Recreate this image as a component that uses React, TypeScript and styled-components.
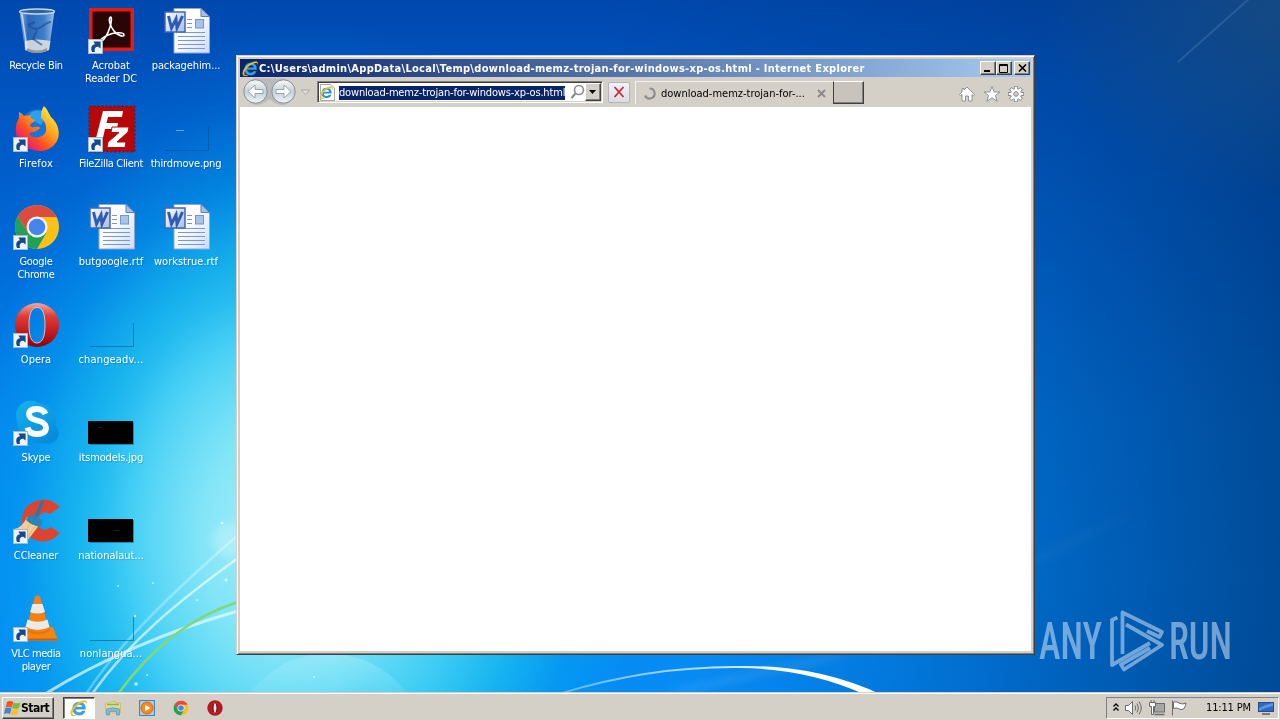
import React from "react";
import styled, { createGlobalStyle, css } from "styled-components";

const FACE = "#d4d0c8";
const SHADOW = "#808080";
const DARK = "#404040";

const GlobalStyle = createGlobalStyle`
  * {
    box-sizing: border-box;
  }

  body {
    margin: 0;
    overflow: hidden;
    font-family: "DejaVu Sans Condensed", "DejaVu Sans", sans-serif;
    font-stretch: condensed;
    font-size: 11px;
    color: #000;
  }

  svg {
    display: block;
    flex: none;
  }
`;

const raised = css`
  border: 1px solid;
  border-color: #fff ${DARK} ${DARK} #fff;
  box-shadow: inset -1px -1px 0 ${SHADOW};
`;

const StyledDesktop = styled.div`
  position: relative;
  display: flex;
  flex-direction: column;
  width: 1280px;
  height: 720px;
  overflow: hidden;
  background:
    radial-gradient(ellipse 150px 230px at 255px 530px, rgba(180, 244, 250, 0.5) 0, rgba(150, 236, 250, 0.3) 50%, transparent 100%),
    radial-gradient(ellipse 400px 520px at 300px 540px, #84e6f6 0, #74e0f6 24%, rgba(62, 206, 244, 0.96) 42%, rgba(24, 184, 238, 0.88) 56%, rgba(4, 154, 236, 0.62) 70%, rgba(0, 126, 226, 0.25) 86%, transparent 100%),
    radial-gradient(ellipse 700px 480px at 330px 700px, rgba(10, 160, 255, 0.85) 0, rgba(10, 150, 255, 0.7) 45%, transparent 100%),
    radial-gradient(ellipse 240px 190px at 1280px 10px, rgba(40, 92, 130, 0.5), transparent),
    linear-gradient(95deg, transparent 45%, rgba(0, 48, 112, 0.32) 80%, rgba(0, 44, 104, 0.66) 100%),
    linear-gradient(#0048ae 0, #0057c3 15%, #006ad8 38%, #007ce8 58%, #0084f0 80%, #0080ee 100%);
`;

const StyledStreaks = styled.svg`
  position: absolute;
  left: 0;
  top: 0;
  pointer-events: none;
`;

const StyledIconGrid = styled.div`
  position: relative;
  flex: 1;
  display: grid;
  grid-template-rows: repeat(7, 98px);
  grid-auto-columns: 75px;
  grid-auto-flow: column;
  margin-left: -1px;
`;

const StyledShortcut = styled.div`
  display: flex;
  flex-direction: column;
  align-items: center;
  gap: 4px;
  padding-top: 7px;
`;

const StyledLabel = styled.span<{ $track: number }>`
  margin-right: 1px;
  color: #fff;
  line-height: 13px;
  text-align: center;
  white-space: pre;
  letter-spacing: ${({ $track }) => $track}px;
  text-shadow: 1px 1px 1px rgba(0, 40, 100, 0.25);
`;

const StyledWindow = styled.div`
  position: absolute;
  left: 236px;
  top: 55px;
  width: 799px;
  height: 600px;
  display: flex;
  flex-direction: column;
  padding: 3px;
  background: ${FACE};
  border: 1px solid;
  border-color: ${FACE} ${DARK} ${DARK} ${FACE};
  box-shadow: inset 1px 1px 0 #fff, inset -1px -1px 0 ${SHADOW};
`;

const StyledTitleBar = styled.div`
  display: flex;
  align-items: center;
  height: 18px;
  padding: 0 1px 0 2px;
  background: linear-gradient(90deg, #0a246a, #a6caf0);
`;

const StyledTitle = styled.span`
  flex: 1;
  color: #fff;
  font-weight: bold;
  white-space: pre;
  letter-spacing: 0.29px;
`;

const StyledCaptionButton = styled.div<{ $gap?: boolean }>`
  ${raised}
  display: flex;
  align-items: center;
  justify-content: center;
  width: 16px;
  height: 14px;
  margin-left: ${({ $gap }) => ($gap ? 2 : 0)}px;
  background: ${FACE};
`;

const StyledToolbar = styled.div`
  display: flex;
  align-items: center;
  height: 30px;
  background: ${FACE};
`;

const StyledAddress = styled.div`
  display: flex;
  align-items: center;
  width: 286px;
  height: 22px;
  margin-left: 5px;
  padding: 0 1px 0 2px;
  background: #fff;
  border: 1px solid;
  border-color: ${SHADOW} #fff #fff ${SHADOW};
  box-shadow: inset 1px 1px 0 ${DARK}, inset -1px -1px 0 ${FACE};
`;

const StyledSelection = styled.span`
  width: 227px;
  height: 14px;
  margin: 1px 5px 0 4px;
  overflow: hidden;
  background: #0a246a;
  color: #fff;
  line-height: 14px;
  white-space: pre;
  letter-spacing: -0.17px;
`;

const StyledDropButton = styled.div`
  ${raised}
  display: flex;
  align-items: center;
  justify-content: center;
  width: 16px;
  height: 18px;
  margin-left: auto;
  background: ${FACE};
`;

const StyledStop = styled.div`
  display: flex;
  align-items: center;
  justify-content: center;
  width: 22px;
  height: 21px;
  margin-left: 5px;
  background: linear-gradient(#f4f2f6, #dcdce6);
  border: 1px solid #b4b4c0;
  border-radius: 2px;
`;

const StyledTab = styled.div`
  display: flex;
  align-items: center;
  width: 198px;
  height: 23px;
  margin-left: 5px;
  padding: 1px 7px 0 7px;
  border-left: 1px solid #f4f2ee;
  border-top: 1px solid #f4f2ee;
`;

const StyledTabText = styled.span`
  flex: 1;
  margin-left: 5px;
  white-space: pre;
`;

const StyledNewTab = styled.div`
  ${raised}
  width: 31px;
  height: 23px;
  background: #c8c4bd;
  border-left-color: ${DARK};
`;

const StyledCommands = styled.div`
  display: flex;
  gap: 6.5px;
  margin-left: auto;
  padding: 4px 6px 0 0;
`;

const StyledPage = styled.div`
  flex: 1;
  background: #fff;
`;

const StyledWatermark = styled.svg`
  position: absolute;
  left: 1036px;
  top: 590px;
  overflow: visible;
`;

const StyledTaskbar = styled.div`
  position: relative;
  display: flex;
  align-items: center;
  height: 28px;
  padding: 2px 1px 0 2px;
  background: ${FACE};
  border-top: 1px solid ${FACE};
  box-shadow: inset 0 1px 0 #fff;
`;

const StyledStart = styled.div`
  ${raised}
  display: flex;
  align-items: center;
  width: 52px;
  height: 22px;
  padding-left: 1px;
  font-weight: bold;
  font-size: 12px;
  letter-spacing: -0.5px;
`;

const StyledTask = styled.div`
  display: flex;
  align-items: center;
  justify-content: center;
  width: 32px;
  height: 22px;
  margin-left: 9px;
  background: #fff;
  border: 1px solid;
  border-color: ${DARK} #fff #fff ${DARK};
  box-shadow: inset 1px 1px 0 ${SHADOW};
`;

const StyledPinned = styled.div`
  display: flex;
  gap: 18px;
  margin-left: 10px;
`;

const StyledTray = styled.div`
  display: flex;
  align-items: center;
  width: 173px;
  height: 22px;
  margin-left: auto;
  padding: 0 2px 0 5px;
  border: 1px solid;
  border-color: ${SHADOW} #fff #fff ${SHADOW};
`;

const StyledClock = styled.span`
  margin: 0 7px 0 10px;
  white-space: pre;
  letter-spacing: -0.15px;
`;

const ShortcutArrow = () => (
  <g>
    <rect x="0.500" y="32.500" width="14" height="14" fill="#eef3f8" stroke="#a9b8c6" />
    <path d="M4 45 C2.200 40.500 4 37.500 7 37.300 L5.400 34.500 H12.600 V41.600 L10.300 39.700 C7.600 39.600 6 41.500 7 45 Z" fill="#15498f" />
  </g>
);

const RecycleBin = () => (
  <svg width="48" height="48" viewBox="0 0 48 48">
    <defs>
      <linearGradient id="bin" x1="0" x2="1">
        <stop offset="0" stopColor="#a8c8e8" stopOpacity="0.85" />
        <stop offset="0.25" stopColor="#2f6cba" stopOpacity="0.85" />
        <stop offset="0.7" stopColor="#4a86d0" stopOpacity="0.85" />
        <stop offset="1" stopColor="#b4cce4" stopOpacity="0.9" />
      </linearGradient>
    </defs>
    <path d="M6.500 4 L12 43 Q24 49 36 43 L41.500 4 Z" fill="url(#bin)" />
    <path d="M12 34 Q24 31 37.500 34 L36 43 Q24 49 12 43 Z" fill="#d9dfe2" opacity="0.9" />
    <path d="M14 41 Q24 46 34 41 V44 Q24 48 14 44 Z" fill="#9a968e" />
    <ellipse cx="24" cy="4.500" rx="17.500" ry="2.500" fill="#2f629f" stroke="#c5d6e4" strokeWidth="1.300" />
    <path d="M15 17 Q21 25 28 20 T38 15 M15 18 L22 15 M24 23 L20 32 L29 38" fill="none" stroke="#1b478c" strokeWidth="2" opacity="0.6" />
    <path d="M9 7 L14 42" stroke="#eef6ff" strokeWidth="1.500" opacity="0.7" />
  </svg>
);

const Acrobat = () => (
  <svg width="48" height="48" viewBox="0 0 48 48">
    <rect x="1" y="1" width="45" height="43" fill="#ea1a10" />
    <rect x="4.500" y="4.500" width="38" height="36" fill="#2a0505" />
    <path d="M22.500 10 C20 12 22 19 26 24 C30 29 36 30 36 28 C36 25 27 25 20 28 C14 30.500 11 34 12.500 34.500 C15 35 20 27 22 20 C23.500 15 24 10 22.500 10 Z" fill="none" stroke="#fff" strokeWidth="1.600" />
    <ShortcutArrow />
  </svg>
);

const WordDoc = () => (
  <svg width="48" height="48" viewBox="0 0 48 48">
    <defs>
      <linearGradient id="sheet" x1="0" x2="1" y2="1">
        <stop offset="0.4" stopColor="#fff" />
        <stop offset="1" stopColor="#c9dcf8" />
      </linearGradient>
      <linearGradient id="badge" x1="0" x2="1" y2="1">
        <stop offset="0" stopColor="#fff" />
        <stop offset="1" stopColor="#a5bdec" />
      </linearGradient>
    </defs>
    <path d="M11 1.500 H38 L46.500 9.500 V46 H11 Z" fill="url(#sheet)" stroke="#8ea5cf" />
    <path d="M38 1.500 V9.500 H46.500 Z" fill="#a9c0e4" stroke="#5c7db8" />
    <path d="M24 12.500 H29 M24 16.500 H29 M24 20.500 H29 M15 25.500 H42 M15 29.500 H42 M15 33.500 H42 M15 37.500 H42 M15 41.500 H42" stroke="#7f96c8" />
    <rect x="32.500" y="12.500" width="8" height="8.500" fill="#a9c2ea" stroke="#7795ca" />
    <rect x="2" y="5" width="20" height="20" fill="url(#badge)" stroke="#4167b2" strokeWidth="1.500" />
    <path d="M5.500 9 L8.500 21 L13 12 L14 21 L19.500 9" fill="none" stroke="#2f5cb0" strokeWidth="3" />
  </svg>
);

const Firefox = () => (
  <svg width="48" height="48" viewBox="0 0 48 48">
    <defs>
      <linearGradient id="fox" x1="0.900" y1="0.100" x2="0.200" y2="0.900">
        <stop offset="0" stopColor="#fff044" />
        <stop offset="0.4" stopColor="#ffa31c" />
        <stop offset="0.72" stopColor="#ff4a26" />
        <stop offset="1" stopColor="#e31587" />
      </linearGradient>
    </defs>
    <circle cx="24" cy="21" r="16.500" fill="#1a74d8" />
    <path d="M17 8 Q24 3 31 7 Q33 14 28 20 L18 14 Z" fill="#2aa0ee" />
    <path d="M31 1 C35 5 35 7 38 12 C45 18 48 28 44 36 C39 45 29 48 20 45 C8 42 1 33 3 22 C3 18 5 15 6 13 L6 7 Q9 8 11 11 L18 10 C17 13 18 14 22 15 C22 17 17 18 17 21 C20 24 24 20 27 23 C22 29 17 26 16 29 C20 35 31 33 33 26 C34 20 31 15 28 13 C28 9 28 5 31 1 Z" fill="url(#fox)" />
    <ShortcutArrow />
  </svg>
);

const FileZilla = () => (
  <svg width="48" height="48" viewBox="0 0 48 48">
    <rect x="1.500" y="1.500" width="45" height="45" fill="#b80708" stroke="#8f0810" strokeWidth="2" strokeDasharray="2 2" />
    <path d="M15 6 H35 L34 12 H20 L18.500 18 H30 L29 24 H17 L14 37 H7 Z" fill="#fff" />
    <path d="M24 22 H41 L40 27 L29 37 H38 L37 42.500 H19 L20 37 L31 27.500 H23 Z" fill="#fff" stroke="#b80708" strokeWidth="1" />
    <ShortcutArrow />
  </svg>
);

const ChromeLogo = () => (
  <>
    <circle cx="24" cy="24" r="22" fill="#fbc116" />
    <path d="M4.950 13 L14.500 29.500 L24 34 L33.500 29.500 L24 46 A22 22 0 0 1 4.950 13" fill="#21a05a" />
    <path d="M4.950 13 A22 22 0 0 1 43.600 14 H24 L14.500 29.500 Z" fill="#dd4b3e" />
    <circle cx="24" cy="24" r="10.500" fill="#f4f4f4" />
    <circle cx="24" cy="24" r="8.300" fill="#4685ec" />
  </>
);

const Chrome = () => (
  <svg width="48" height="48" viewBox="0 0 48 48">
    <ChromeLogo />
    <ShortcutArrow />
  </svg>
);

const Opera = () => (
  <svg width="48" height="48" viewBox="0 0 48 48">
    <defs>
      <linearGradient id="opera" x1="0" y1="0" x2="0" y2="1">
        <stop offset="0" stopColor="#f0a9a3" />
        <stop offset="0.3" stopColor="#df3c35" />
        <stop offset="0.75" stopColor="#bb1216" />
        <stop offset="1" stopColor="#7f080c" />
      </linearGradient>
    </defs>
    <path
      fillRule="evenodd"
      d="M24 2 A22 22 0 1 0 24 46 A22 22 0 1 0 24 2 Z M24 6.500 C30 6.500 32 14 32 24 C32 34 30 42 24 42 C18 42 16 34 16 24 C16 14 18 6.500 24 6.500 Z"
      fill="url(#opera)"
    />
    <path d="M24 6.500 C30 6.500 32 14 32 24 C32 34 30 42 24 42 C18 42 16 34 16 24 C16 14 18 6.500 24 6.500 Z" fill="none" stroke="#f1c7c4" strokeWidth="0.900" />
    <ShortcutArrow />
  </svg>
);

const Skype = () => (
  <svg width="48" height="48" viewBox="0 0 48 48">
    <defs>
      <linearGradient id="skype" x1="0" x2="0.600" y2="1">
        <stop offset="0" stopColor="#15b4ee" />
        <stop offset="1" stopColor="#078bdc" />
      </linearGradient>
    </defs>
    <path d="M14 2 Q21 1 25 4 Q38 5 42 17 Q44 22 43 27 Q48 34 44 40 Q38 47 29 44 Q15 46 7 33 Q4 27 4 21 Q0 8 14 2 Z" fill="url(#skype)" />
    <path d="M32.500 15 Q30 10 24 10 Q16 10 16 15.500 Q16 19.500 24 21.500 Q33 23.500 33 28.500 Q33 35 24 35 Q16 35 14.500 28.500" fill="none" stroke="#fff" strokeWidth="5.800" />
    <ShortcutArrow />
  </svg>
);

const CCleaner = () => (
  <svg width="48" height="48" viewBox="0 0 48 48">
    <path d="M47 10 Q36 -1 23 4 Q9 9 9 24 Q9 38 22 43 Q36 48 47 36 L38 30 Q32 35 27 31 Q22 25 26 19 Q31 13 37 17 Z" fill="#dd4430" />
    <path d="M14 20 Q22 16 28 22 L24 31 L14 44 L1 32 Q9 31 14 20 Z" fill="#f3cd98" />
    <path d="M17 27 L8 40 M22 29 L13 43" stroke="#e0b57c" />
    <path d="M15 19 Q23 16 29 23 L28 29 Q20 30 13 23 Z" fill="#2c83b8" />
    <path d="M28.500 3 L31 4 L25 20 L21.500 19 Z" fill="#2478ac" />
    <ShortcutArrow />
  </svg>
);

const Vlc = () => (
  <svg width="48" height="48" viewBox="0 0 48 48">
    <path d="M8 32 H40 L45 45.500 H6 Z" fill="#f38613" />
    <path d="M6 45.500 L7 43.500 H44.300 L45 45.500 Z" fill="#d35f04" />
    <path d="M22 1.500 Q24.500 -0.500 27 1.500 L36 35 Q25 41 13 35 Z" fill="#f58013" />
    <path d="M19.500 9 H29.500 L32 17 Q24.500 20 17 17 Z M14.500 24.500 Q24.500 29 34.500 24.500 L36.500 32 Q24.500 38 12.500 32 Z" fill="#ece9e6" />
    <path d="M12.500 33.500 Q25 41 36.500 33.500 L37 36 Q25 43 12 36 Z" fill="#e8740c" />
    <ShortcutArrow />
  </svg>
);

// Image thumbnails: either a solid black picture or one that has faded into the wallpaper
const Thumbnail = ({ dark, line }: { dark?: boolean; line?: string }) => (
  <svg width="48" height="48" viewBox="0 0 48 48">
    {dark ? (
      <>
        <path d="M2 45.500 H45.500 V23" fill="none" stroke="#034a82" strokeOpacity="0.5" />
        <rect x="0" y="22" width="45" height="23" fill="#000" />
      </>
    ) : (
      <path d="M2 45.500 H45.500 V22" fill="none" stroke="#034a82" strokeOpacity="0.55" />
    )}
    {line && <path d={line} stroke={dark ? "#12351a" : "#8fc0ee"} strokeOpacity="0.7" />}
  </svg>
);

const ieBody =
  "M15.500 10.200 H5.500 Q5.800 13.500 9.300 13.500 Q11.300 13.500 12.200 12 H15.200 Q13.800 16.200 9.200 16.200 Q2.700 16 2.600 9.500 Q3 3.200 9.200 3 Q15.800 3.200 15.500 10.200 Z M5.600 8 H12.500 Q12.200 5.500 9.200 5.400 Q6.200 5.500 5.600 8 Z";
const ieRing =
  "M1.500 16.500 C-1.500 13 4 5 11 2.300 C15 0.800 17.500 1.500 16.500 5 C16.800 2.800 14.500 2.500 11.500 4 C5.500 7 0.500 13.500 3 15.800 C4 16.500 6 16 7.500 15 C5.500 17 2.800 17.600 1.500 16.500 Z";

const IeLogo = ({ size }: { size: number }) => (
  <svg width={size} height={size} viewBox="0 0 18 18">
    <path d={ieBody} fill="#35a4ea" fillRule="evenodd" stroke="#1c6fb8" strokeWidth="0.300" />
    <path d={ieRing} fill="#f3c02c" stroke="#d99b12" strokeWidth="0.200" />
  </svg>
);

const shortcuts: { label: string; icon: React.ReactNode; track: number }[] = [
  { label: "Recycle Bin", icon: <RecycleBin />, track: -0.3 },
  { label: "Firefox", icon: <Firefox />, track: 0.2 },
  { label: "Google\nChrome", icon: <Chrome />, track: -0.3 },
  { label: "Opera", icon: <Opera />, track: 0 },
  { label: "Skype", icon: <Skype />, track: -0.2 },
  { label: "CCleaner", icon: <CCleaner />, track: -0.1 },
  { label: "VLC media\nplayer", icon: <Vlc />, track: -0.4 },
  { label: "Acrobat\nReader DC", icon: <Acrobat />, track: -0.05 },
  { label: "FileZilla Client", icon: <FileZilla />, track: -0.33 },
  { label: "butgoogle.rtf", icon: <WordDoc />, track: 0 },
  { label: "changeadv...", icon: <Thumbnail />, track: 0.15 },
  { label: "itsmodels.jpg", icon: <Thumbnail dark line="M10 28.500 H15" />, track: -0.15 },
  { label: "nationalaut...", icon: <Thumbnail dark line="M25 33.500 H32" />, track: 0 },
  { label: "nonlangua...", icon: <Thumbnail />, track: 0.05 },
  { label: "packagehim...", icon: <WordDoc />, track: -0.1 },
  { label: "thirdmove.png", icon: <Thumbnail line="M13 25.500 H21" />, track: -0.15 },
  { label: "workstrue.rtf", icon: <WordDoc />, track: 0 },
];

const Streaks = () => (
  <StyledStreaks width="1280" height="692" viewBox="0 0 1280 692">
    <defs>
      <filter id="soft" x="-20%" y="-20%" width="140%" height="140%">
        <feGaussianBlur stdDeviation="0.7" />
      </filter>
      <filter id="haze" x="-30%" y="-30%" width="160%" height="160%">
        <feGaussianBlur stdDeviation="4" />
      </filter>
      <linearGradient id="beam" x1="0" x2="1">
        <stop offset="0" stopColor="#fff" stopOpacity="0.35" />
        <stop offset="0.5" stopColor="#fff" stopOpacity="0.75" />
        <stop offset="0.7" stopColor="#fff" />
      </linearGradient>
      <linearGradient id="dome" x1="0" y1="0" x2="0" y2="1">
        <stop offset="0" stopColor="#b4f0fa" stopOpacity="0.35" />
        <stop offset="1" stopColor="#b4f0fa" stopOpacity="0.1" />
      </linearGradient>
    </defs>
    <path d="M249 694 Q282 652 330 654 Q378 655 408 694 Z" fill="url(#dome)" />
    <g fill="none" filter="url(#soft)">
      <path d="M86 694 C120 642 175 590 238 535" stroke="#fff" strokeOpacity="0.3" strokeWidth="2.500" />
      <path d="M92 694 C130 640 180 600 238 558" stroke="#fff" strokeOpacity="0.6" strokeWidth="2.500" />
      <path d="M45 694 C100 660 170 630 238 611" stroke="#e8fcff" strokeOpacity="0.7" strokeWidth="3" />
      <path d="M118 694 C150 650 190 617 238 602" stroke="#7fd97a" strokeWidth="2.500" />
      <path d="M562 692 Q650 665.500 737 666 Q818 664 884 696 L868 696 Q808 668 737 668 Q650 667.500 562 694 Z" fill="url(#beam)" />
      <path d="M1178 62 L1250 -2" stroke="#5f93c0" strokeOpacity="0.3" strokeWidth="2" />
    </g>
    <g filter="url(#haze)" fill="#fff">
      <path d="M1034 566 L1130 515 L1130 512 L1034 556 Z" opacity="0.04" />
      <path d="M690 692 L850 655 H830 L660 692 Z" opacity="0.12" />
      <ellipse cx="232" cy="540" rx="20" ry="18" opacity="0.25" />
    </g>
    <g fill="#eaffff" opacity="0.75">
      <circle cx="222" cy="523" r="1.500" />
      <circle cx="226" cy="580" r="1.500" />
      <circle cx="118" cy="586" r="1" />
      <circle cx="153" cy="583" r="1" />
      <circle cx="135" cy="616" r="1.200" />
      <circle cx="197" cy="600" r="1" />
      <circle cx="136" cy="684" r="1.800" />
      <circle cx="147" cy="675" r="1" />
      <circle cx="314" cy="677" r="1" />
    </g>
  </StyledStreaks>
);

const Watermark = () => (
  <StyledWatermark width="210" height="96" viewBox="1036 590 210 96">
    <g opacity="0.55" fill="#cfe3f8" fontFamily="Roboto, sans-serif" fontSize="51" fontWeight="500">
      <text x="1039" y="659" textLength="63" lengthAdjust="spacingAndGlyphs">
        ANY
      </text>
      <text x="1169" y="659" textLength="63" lengthAdjust="spacingAndGlyphs">
        RUN
      </text>
      <g fill="none" stroke="#cfe3f8" strokeWidth="3.800" strokeLinejoin="round">
        <path d="M1117.500 617.500 L1112 620 V665 L1150 643" />
        <path d="M1122.500 654 V612.500 L1162 632 L1159.500 637 L1147 631" />
        <path d="M1126 624.500 L1162 645 L1124 669.500 L1121 664.500 L1150 648" />
      </g>
    </g>
  </StyledWatermark>
);

const NavButtons = () => (
  <svg width="72" height="28" viewBox="240 79 72 28">
    <defs>
      <linearGradient id="orb" x1="0" y1="0" x2="0" y2="1">
        <stop offset="0" stopColor="#f8fbfd" />
        <stop offset="0.5" stopColor="#c6d0d8" />
        <stop offset="1" stopColor="#eef5f8" />
      </linearGradient>
    </defs>
    <path d="M255 79.500 H284 A13.500 13.500 0 0 1 284 106 Q276 106 269.500 100 Q263 106 255.500 106 A13.500 13.500 0 0 1 255 79.500 Z" fill="#b9babb" />
    {[255.5, 283.5].map(cx => (
      <circle key={cx} cx={cx} cy="92.500" r="11.700" fill="url(#orb)" stroke="#7d868c" strokeWidth="0.900" />
    ))}
    <path d="M248 92.500 L255 86 V90.500 H263 V94.500 H255 V99 Z" fill="#fff" stroke="#98a4ac" />
    <path d="M291 92.500 L284 86 V90.500 H276 V94.500 H284 V99 Z" fill="#fff" stroke="#98a4ac" />
    <path d="M301.500 91 H309.500 L305.500 95.500 Z" fill="#e6e3de" stroke="#a9a6a1" />
  </svg>
);

const App = () => (
  <>
    <GlobalStyle />
    <StyledDesktop>
      <Streaks />
      <StyledIconGrid>
        {shortcuts.map(({ label, icon, track }) => (
          <StyledShortcut key={label}>
            {icon}
            <StyledLabel $track={track}>{label}</StyledLabel>
          </StyledShortcut>
        ))}
      </StyledIconGrid>
      <Watermark />

      <StyledWindow>
        <StyledTitleBar>
          <IeLogo size={17} />
          <StyledTitle>
            C:\Users\admin\AppData\Local\Temp\download-memz-trojan-for-windows-xp-os.html - Internet Explorer
          </StyledTitle>
          <StyledCaptionButton>
            <svg width="10" height="9" viewBox="0 0 10 9">
              <path d="M1 7 H7" stroke="#000" strokeWidth="2" />
            </svg>
          </StyledCaptionButton>
          <StyledCaptionButton>
            <svg width="10" height="9" viewBox="0 0 10 9">
              <path d="M0.500 0.500 H8.500 V8.500 H0.500 Z M0 1.500 H9" fill="none" stroke="#000" />
            </svg>
          </StyledCaptionButton>
          <StyledCaptionButton $gap>
            <svg width="9" height="8" viewBox="0 0 9 8">
              <path d="M1 0.500 L8 7.500 M8 0.500 L1 7.500" stroke="#000" strokeWidth="1.600" />
            </svg>
          </StyledCaptionButton>
        </StyledTitleBar>

        <StyledToolbar>
          <NavButtons />
          <StyledAddress>
            <svg width="15" height="17" viewBox="0 0 15 17">
              <path d="M0.500 0.500 H11 L14.500 4 V16.500 H0.500 Z" fill="#fbfbfb" stroke="#a8a8a8" />
              <g transform="translate(-0.500 1.500) scale(0.78)">
                <path d={ieBody} fill="#2b8fd9" fillRule="evenodd" />
                <path d={ieRing} fill="#d9c93a" stroke="#d9c93a" strokeWidth="0.700" />
              </g>
            </svg>
            <StyledSelection>download-memz-trojan-for-windows-xp-os.html</StyledSelection>
            <svg width="15" height="16" viewBox="0 0 15 16">
              <circle cx="9" cy="6" r="4.500" fill="none" stroke="#8b8b8b" strokeWidth="1.600" />
              <path d="M5.500 9.500 L1.500 14" stroke="#8b8b8b" strokeWidth="2.200" />
            </svg>
            <StyledDropButton>
              <svg width="8" height="4" viewBox="0 0 8 4">
                <path d="M0 0 H7 L3.500 4 Z" />
              </svg>
            </StyledDropButton>
          </StyledAddress>
          <StyledStop>
            <svg width="12" height="12" viewBox="0 0 12 12">
              <path d="M1.500 1 L10.500 11 M10.500 1 L1.500 11" stroke="#cc2a30" strokeWidth="1.800" />
            </svg>
          </StyledStop>
          <StyledTab>
            <svg width="13" height="13" viewBox="0 0 13 13">
              <path d="M6.500 1.500 A5 5 0 1 1 2 8.500" fill="none" stroke="#8e8e8e" strokeWidth="2.200" />
            </svg>
            <StyledTabText>download-memz-trojan-for-...</StyledTabText>
            <svg width="9" height="9" viewBox="0 0 9 9">
              <path d="M1 1 L8 8 M8 1 L1 8" stroke="#8a8886" strokeWidth="1.900" />
            </svg>
          </StyledTab>
          <StyledNewTab />
          <StyledCommands>
            <svg width="18" height="18" viewBox="0 0 18 18">
              <path d="M9 2 L16.500 9.500 L15.500 10.700 L14 9.500 V16 H10.500 V11 H7.500 V16 H4 V9.500 L2.500 10.700 L1.500 9.500 L4 7 V3.500 H6 V5 Z" fill="#fff" stroke="#858a90" strokeWidth="0.900" />
            </svg>
            <svg width="18" height="18" viewBox="0 0 18 18">
              <path d="M9 1.500 L11.200 7 H17 L12.400 10.500 L14.100 16.300 L9 12.800 L3.900 16.300 L5.600 10.500 L1 7 H6.800 Z" fill="#fff" stroke="#858a90" strokeWidth="0.900" />
            </svg>
            <svg width="18" height="18" viewBox="0 0 18 18">
              <g stroke="#858a90" strokeWidth="3.800">
                <path d="M9 1 V17 M1 9 H17 M3.300 3.300 L14.700 14.700 M14.700 3.300 L3.300 14.700" />
              </g>
              <circle cx="9" cy="9" r="5.500" fill="#fff" stroke="#858a90" strokeWidth="0.900" />
              <g stroke="#fff" strokeWidth="2.200">
                <path d="M9 1.800 V16.200 M1.800 9 H16.200 M3.900 3.900 L14.100 14.100 M14.100 3.900 L3.900 14.100" />
              </g>
              <circle cx="9" cy="9" r="2.300" fill={FACE} stroke="#858a90" />
            </svg>
          </StyledCommands>
        </StyledToolbar>
        <StyledPage />
      </StyledWindow>

      <StyledTaskbar>
        <StyledStart>
          <svg width="17" height="16" viewBox="0 0 17 16">
            <path d="M3 2 Q6 0 9.300 2 L7.800 7.700 Q4.500 6 1.500 7.700 Z" fill="#e8562a" />
            <path d="M9.700 2.500 Q13 4.200 16.500 2.500 L15 8 Q11.500 9.700 8.200 8 Z" fill="#7fb93c" />
            <path d="M1.300 8.300 Q4.400 6.700 7.500 8.300 L6 14 Q3 12.300 0 14 Z" fill="#3f84d4" />
            <path d="M8 8.700 Q11.300 10.300 14.700 8.700 L13.200 14.400 Q9.800 16 6.500 14.400 Z" fill="#f5c02e" />
          </svg>
          Start
        </StyledStart>
        <StyledTask>
          <IeLogo size={18} />
        </StyledTask>
        <StyledPinned>
          <svg width="16" height="16" viewBox="0 0 16 16">
            <path d="M0.500 3 H5 L6 1.500 H10 L11 3 H15.500 V13 H0.500 Z" fill="#f0d77c" stroke="#cfae50" strokeWidth="0.600" />
            <path d="M2 4.500 H14" stroke="#6bbf73" strokeWidth="1.500" />
            <path d="M1.500 9 Q8 6.500 14.500 9 V15 H11.500 V11.500 H4.500 V15 H1.500 Z" fill="#7cb9e2" stroke="#4a8fc2" strokeWidth="0.600" />
          </svg>
          <svg width="16" height="16" viewBox="0 0 16 16">
            <rect x="0.500" y="0.500" width="15" height="15" fill="#a9cbec" stroke="#4b81bb" />
            <circle cx="8" cy="8" r="6" fill="#f58a1a" stroke="#d86a08" />
            <path d="M6.200 4.700 L11.500 8 L6.200 11.300 Z" fill="#fff" />
          </svg>
          <svg width="16" height="16" viewBox="0 0 48 48">
            <ChromeLogo />
          </svg>
          <svg width="16" height="16" viewBox="0 0 48 48">
            <circle cx="24" cy="24" r="23" fill="#b51a1d" />
            <ellipse cx="24" cy="24" rx="6" ry="16" fill="#f2e8e6" stroke="#7d0b10" strokeWidth="3" />
          </svg>
        </StyledPinned>

        <StyledTray>
          <svg width="8" height="10" viewBox="0 0 8 10">
            <path d="M1.500 3.500 L4 1 L6.500 3.500 M1.500 7.500 L4 5 L6.500 7.500" fill="none" stroke="#000" strokeWidth="1.300" />
          </svg>
          <svg width="76" height="18" viewBox="1122 698 76 18">
            <g fill="#fff" stroke="#6a6a6a" strokeWidth="1">
              <path d="M1127.500 704.500 H1130.500 L1134.500 700.500 V713.500 L1130.500 709.500 H1127.500 Z" />
              <path d="M1137 704.500 Q1138.500 707 1137 709.500 M1139 702.500 Q1142 707 1139 711.500 M1141 700.500 Q1145.500 707 1141 713.500" fill="none" />
              <rect x="1156.500" y="702.500" width="10" height="8.500" fill="#a7a7a5" />
              <path d="M1156.500 713.500 H1166.500" fill="none" strokeWidth="1.500" />
              <path d="M1151.500 701.500 H1157.500 V705.500 H1155.500 V713.500 H1153.500 V705.500 H1151.500 Z M1153 699 V701.500 M1156 699 V701.500" />
              <path d="M1174.500 699.500 V714.500 M1175.500 701 Q1178 700 1181 702 Q1184 704 1188 702 Q1187.500 706 1185.500 708 Q1183 709.500 1180.500 707.500 Q1178 706.500 1175.500 707.500 Z" />
            </g>
          </svg>
          <StyledClock>11:11 PM</StyledClock>
          <svg width="16" height="14" viewBox="0 0 16 14">
            <rect x="0.500" y="1.500" width="15" height="9" fill="#2f68c4" stroke="#2a4d88" />
            <path d="M1 7 Q8 3 15 2 V5 Q8 6 1 10 Z" fill="#5c94e0" />
            <path d="M4 13 H12" stroke="#55606c" strokeWidth="1.500" />
          </svg>
        </StyledTray>
      </StyledTaskbar>
    </StyledDesktop>
  </>
);

export default App;
